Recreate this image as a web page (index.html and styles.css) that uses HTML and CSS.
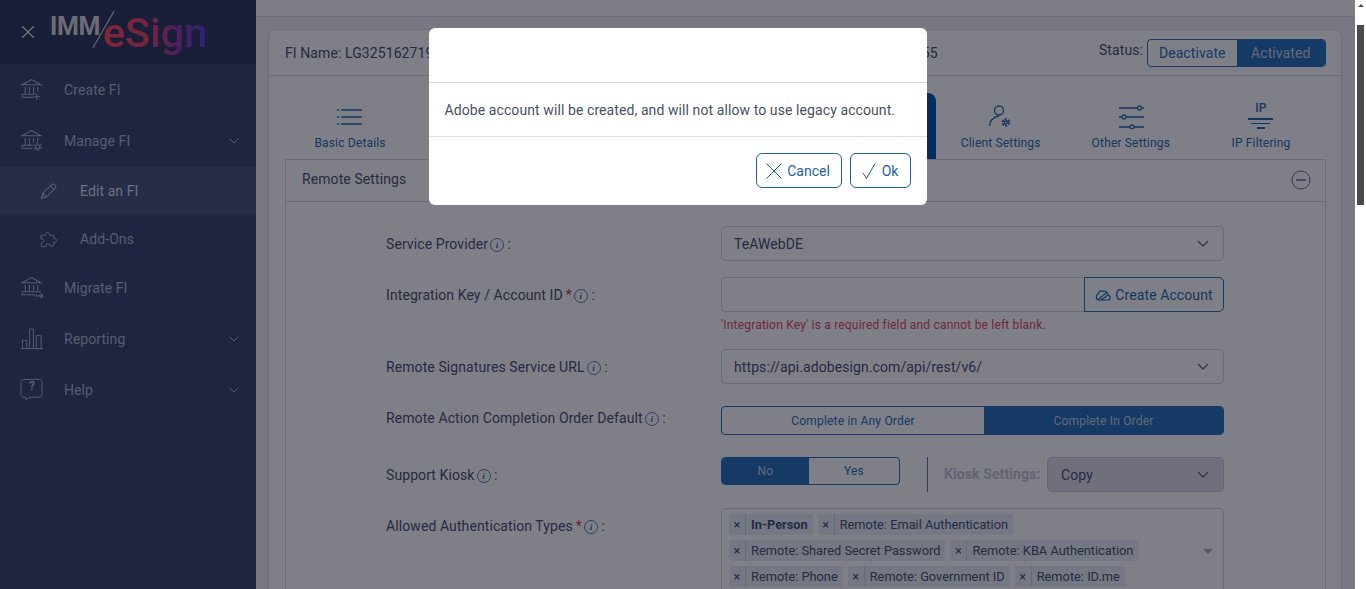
FILE: index.html
```html
<!DOCTYPE html>
<html lang="en">
<head>
    <meta charset="UTF-8">
    <meta name="viewport" content="width=device-width, initial-scale=1.0">
    <title>IMM eSign - Edit an FI</title>
    <link rel="stylesheet" href="styles.css">
</head>
<body>
<div class="shell">
  <div class="page">

    <!-- Sidebar -->
    <aside class="sidebar">
      <div class="brand">
        <svg class="brand-close" viewBox="0 0 16 16"><path d="M1.500 1.500L14.500 14.500M14.500 1.500L1.500 14.500"/></svg>
        <div class="logo">
          <span class="logo-imm">IMM</span>
          <svg class="logo-slash" viewBox="0 0 24 40"><path d="M23 1L1 39"/></svg>
          <span class="logo-esign">eSign</span>
        </div>
      </div>
      <nav>
        <a class="nav-item">
          <svg class="nav-icon" viewBox="0 0 22 22"><path d="M2 6.500L11 1.500L20 6.500ZM3 6.500H19M5 8.500V15M9 8.500V15M13 8.500V15M17 8.500V13M2 15.500H15M2 15.500V18.500H13M16 15V21M13 18H19.500"/></svg>
          <span>Create FI</span>
        </a>
        <a class="nav-item">
          <svg class="nav-icon" viewBox="0 0 22 22"><path d="M2 6.500L11 1.500L20 6.500ZM3 6.500H19M5 8.500V15M9 8.500V15M13 8.500V13M17 8.500V12M2 15.500H12M2 15.500V18.500H12"/><circle cx="17" cy="17" r="2"/><circle cx="17" cy="17" r="3.600" stroke-dasharray="2 1.800"/></svg>
          <span>Manage FI</span>
          <svg class="nav-chevron" viewBox="0 0 10 6"><path d="M.5 .5L5 5L9.500 .5"/></svg>
        </a>
        <a class="nav-item sub active">
          <svg class="sub-icon" viewBox="0 0 18 18"><path d="M1.500 16.500L3 11L12.500 1.500C13.500 .8 15 1 16 2C16.800 3 17 4 16.500 5L7 14.500ZM3 11L7 14.500M11 3L15 7"/></svg>
          <span>Edit an FI</span>
        </a>
        <a class="nav-item sub">
          <svg class="sub-icon" viewBox="0 0 18 18"><path d="M6 3.500C6 1 10 1 10 3.500V4.500H14.500V8H16C18 8 18 12 16 12H14.500V16H10.500V15C10.500 13 6.500 13 6.500 15V16.500H1.500V12.500H2.500C4.500 12.500 4.500 8.500 2.500 8.500H1V4.500H6Z"/></svg>
          <span>Add-Ons</span>
        </a>
        <a class="nav-item">
          <svg class="nav-icon" viewBox="0 0 22 22"><path d="M2 6.500L11 1.500L20 6.500ZM3 6.500H19M5 8.500V14M9 8.500V14M13 8.500V14M17 8.500V14M2 15H20M2 15V18H14M14 19H22M19.500 16.500L22 19L19.500 21.500"/></svg>
          <span>Migrate FI</span>
        </a>
        <a class="nav-item">
          <svg class="nav-icon" viewBox="0 0 24 24"><path d="M1 22.500H24M2.500 22.500V14H7V22.500M10 22.500V2H14V22.500M17 22.500V9H22V22.500"/></svg>
          <span>Reporting</span>
          <svg class="nav-chevron" viewBox="0 0 10 6"><path d="M.5 .5L5 5L9.500 .5"/></svg>
        </a>
        <a class="nav-item">
          <svg class="nav-icon" viewBox="0 0 24 24"><path d="M4 1.500H20C21.500 1.500 23 3 23 4.500V17C23 18.500 21.500 20 20 20H11L6 22.500V20H4C2.500 20 1 18.500 1 17V4.500C1 3 2.500 1.500 4 1.500Z"/></svg>
          <span class="help-mark">?</span>
          <span>Help</span>
          <svg class="nav-chevron" viewBox="0 0 10 6"><path d="M.5 .5L5 5L9.500 .5"/></svg>
        </a>
      </nav>
    </aside>

    <!-- Main content -->
    <main class="main">
      <div class="topbar"></div>
      <div class="card">
        <div class="card-head">
          <span>FI Name: LG3251627190</span>
          <span class="fi-id">FI ID: 3255</span>
          <div class="status">
            <span class="status-label">Status:</span>
            <div class="toggle status-toggle">
              <span>Deactivate</span>
              <span class="on">Activated</span>
            </div>
          </div>
        </div>

        <div class="tabs">
          <div class="tab">
            <svg class="tab-icon icon-list" viewBox="0 0 28 24"><path d="M5 5H26M5 12H26M5 19H26M1 5H3M1 12H3M1 19H3"/></svg>
            <span>Basic Details</span>
          </div>
          <div class="tab"></div>
          <div class="tab"></div>
          <div class="tab"></div>
          <div class="tab active">
            <span>Remote Settings</span>
          </div>
          <div class="tab">
            <svg class="tab-icon" viewBox="0 0 28 24"><circle cx="12" cy="5.500" r="4.500"/><path d="M2.500 21C3 16 6 12 12 11"/><circle cx="18.700" cy="17.500" r="1.500"/><circle cx="18.700" cy="17.500" r="3.200" stroke-dasharray="2 1.400" stroke-width="2.200"/></svg>
            <span>Client Settings</span>
          </div>
          <div class="tab">
            <svg class="tab-icon" viewBox="0 0 28 24"><path d="M2 3H20.500M24.500 3H27M2 12H5M9 12H27M2 22H13M17 22H27"/><circle cx="22.500" cy="3" r="2"/><circle cx="7" cy="12" r="2"/><circle cx="15" cy="22" r="2"/></svg>
            <span>Other Settings</span>
          </div>
          <div class="tab">
            <div class="ip-icon">
              <b>IP</b>
              <i class="ip-line wide"></i>
              <i class="ip-line mid"></i>
              <i class="ip-line small"></i>
            </div>
            <span>IP Filtering</span>
          </div>
        </div>

        <section class="panel">
          <div class="panel-head">
            <span>Remote Settings</span>
            <svg class="collapse" viewBox="0 0 20 20"><circle cx="10" cy="10" r="9"/><path class="collapse-bar" d="M5 10H15"/></svg>
          </div>
          <div class="panel-body">

            <div class="row">
              <label class="row-label">Service Provider<i class="info">i</i> :</label>
              <div class="row-control">
                <div class="select">
                  <span>TeAWebDE</span>
                  <svg class="chevron" viewBox="0 0 12 7"><path d="M1 1L6 6L11 1"/></svg>
                </div>
              </div>
            </div>

            <div class="row">
              <label class="row-label">Integration Key / Account ID<em class="req">*</em><i class="info">i</i> :</label>
              <div class="row-control">
                <div class="input-group">
                  <div class="input-box"></div>
                  <div class="input-btn">
                    <svg class="cloud" viewBox="0 0 16 12"><path d="M4 11H12.500C16 11 16 6.500 13 6C13 3 10 1.500 8 2.500C6.500 1 3.500 2 3.500 5C.5 5.500 .5 11 4 11ZM3.500 10L12 3.500M6 11L13 6"/></svg>
                    Create Account
                  </div>
                </div>
                <p class="error">'Integration Key' is a required field and cannot be left blank.</p>
              </div>
            </div>

            <div class="row row-wide">
              <label class="row-label">Remote Signatures Service URL<i class="info">i</i> :</label>
              <div class="row-control">
                <div class="select">
                  <span>https://api.adobesign.com/api/rest/v6/</span>
                  <svg class="chevron" viewBox="0 0 12 7"><path d="M1 1L6 6L11 1"/></svg>
                </div>
              </div>
            </div>

            <div class="row row-wide">
              <label class="row-label label-toggle">Remote Action Completion Order Default<i class="info">i</i> :</label>
              <div class="row-control">
                <div class="toggle order-toggle">
                  <span>Complete in Any Order</span>
                  <span class="on">Complete In Order</span>
                </div>
              </div>
            </div>

            <div class="row">
              <label class="row-label">Support Kiosk<i class="info">i</i> :</label>
              <div class="row-control kiosk">
                <div class="toggle kiosk-toggle">
                  <span class="on">No</span>
                  <span>Yes</span>
                </div>
                <div class="kiosk-divider"></div>
                <span class="kiosk-label">Kiosk Settings:</span>
                <div class="select disabled">
                  <span>Copy</span>
                  <svg class="chevron" viewBox="0 0 12 7"><path d="M1 1L6 6L11 1"/></svg>
                </div>
              </div>
            </div>

            <div class="row">
              <label class="row-label">Allowed Authentication Types<em class="req">*</em><i class="info">i</i> :</label>
              <div class="row-control">
                <div class="multi">
                  <div class="chips">
                    <div class="chip-row">
                      <span class="chip"><i>×</i><b>In-Person</b></span>
                      <span class="chip"><i>×</i>Remote: Email Authentication</span>
                    </div>
                    <div class="chip-row">
                      <span class="chip"><i>×</i>Remote: Shared Secret Password</span>
                      <span class="chip"><i>×</i>Remote: KBA Authentication</span>
                    </div>
                    <div class="chip-row">
                      <span class="chip"><i>×</i>Remote: Phone</span>
                      <span class="chip"><i>×</i>Remote: Government ID</span>
                      <span class="chip"><i>×</i>Remote: ID.me</span>
                    </div>
                  </div>
                  <span class="multi-arrow"></span>
                </div>
              </div>
            </div>

          </div>
        </section>
      </div>
    </main>

    <!-- Dialog -->
    <div class="overlay">
      <div class="modal">
        <div class="modal-head"></div>
        <div class="modal-body">Adobe account will be created, and will not allow to use legacy account.</div>
        <div class="modal-foot">
          <button class="btn btn-cancel">
            <svg class="btn-icon" viewBox="0 0 16 16"><path d="M.5 .5L15.500 15.500M15.500 .5L.5 15.500"/></svg>
            Cancel
          </button>
          <button class="btn btn-ok">
            <svg class="btn-icon" viewBox="0 0 16 16"><path d="M2 10L5.500 15.500L14 .5"/></svg>
            Ok
          </button>
        </div>
      </div>
    </div>
  </div>

  <!-- Scrollbar -->
  <div class="scrollbar">
    <span class="scroll-arrow"></span>
    <span class="scroll-thumb"></span>
  </div>
</div>
</body>
</html>
```

FILE: styles.css
```css
* {
    box-sizing: border-box;
}
body, html {
    margin: 0;
    padding: 0;
    height: 100%;
    overflow: hidden;
    font-family: Roboto, Arial, sans-serif;
    font-size: 14px;
    letter-spacing: .09px;
    color: #4e5672;
}
svg {
    fill: none;
    stroke: currentColor;
    flex: none;
}
.shell {
    display: flex;
    height: 589px;
    background: #fff;
}
.page {
    position: relative;
    flex: 1;
    display: flex;
    min-width: 0;
    overflow: hidden;
}

/* Scrollbar */
.scrollbar {
    width: 11px;
    background: #fff;
    display: flex;
    flex-direction: column;
    align-items: center;
    padding: 4px 2px 0 2px;
}
.scroll-arrow {
    width: 0;
    height: 0;
    border-left: 3px solid transparent;
    border-right: 3px solid transparent;
    border-bottom: 3px solid #505050;
    margin-bottom: 18px;
}
.scroll-thumb {
    width: 7px;
    height: 180px;
    background: #4a4a4a;
}

/* Sidebar */
.sidebar {
    width: 256px;
    flex: none;
    background: #3e4a70;
    color: #aeb8d0;
}
.brand {
    height: 64px;
    background: #323e60;
    display: flex;
    align-items: center;
    padding-left: 21px;
    padding-bottom: 2px;
}
.brand-close {
    width: 14px;
    height: 14px;
    color: #fff;
    stroke-width: 1.400;
    margin-top: 2px;
}
.logo {
    display: flex;
    align-items: center;
    margin-left: 15px;
    height: 50px;
    margin-top: 2px;
}
.logo-imm {
    font-size: 25px;
    font-weight: 700;
    color: #d8d8da;
    letter-spacing: -.4px;
    margin-top: -11px;
}
.logo-slash {
    width: 23px;
    height: 39px;
    margin-left: -8px;
    margin-right: -12px;
    margin-top: -6px;
    color: #d8d8da;
    stroke-width: 1.200;
}
.logo-esign {
    font-size: 41.500px;
    font-weight: 500;
    line-height: 50px;
    letter-spacing: 0;
    background: linear-gradient(90deg, #ff5060 0%, #e84870 45%, #9a40b0 72%, #6040e0 100%);
    -webkit-background-clip: text;
    background-clip: text;
    color: transparent;
    margin-top: 2px;
}
.nav-item {
    position: relative;
    display: flex;
    align-items: center;
    height: 51px;
    padding-left: 20px;
}
.nav-item.sub {
    height: 48px;
    padding: 2px 0 0 40px;
}
.nav-item.active {
    background: #4e5a7e;
    color: #d8dcf0;
}
.nav-icon {
    width: 23px;
    height: 23px;
    margin-right: 21px;
    stroke-width: 1;
}
.sub-icon {
    width: 17px;
    height: 17px;
    margin-right: 23px;
    stroke-width: 1;
}
.nav-chevron {
    width: 10px;
    height: 6px;
    margin-left: auto;
    margin-right: 17px;
    stroke-width: 1;
}
.help-mark {
    position: absolute;
    left: 29px;
    top: 15px;
    font-size: 12px;
    font-weight: 700;
}

/* Main */
.main {
    flex: 1;
    min-width: 0;
    background: #f0f0f4;
}
.topbar {
    height: 17px;
    background: #fafafc;
    border-bottom: 1px solid #e0e0e8;
}
.card {
    margin: 12px 13px 0 12px;
    background: #ffffff;
    border: 1px solid #dcdce6;
    border-radius: 8px 8px 0 0;
    padding-bottom: 20px;
}
.card-head {
    display: flex;
    align-items: center;
    height: 46px;
    padding: 0 15px 0 16px;
    border-bottom: 1px solid #d8d8e2;
}
.fi-id {
    margin-left: 429px;
}
.status {
    display: flex;
    align-items: center;
    margin-left: auto;
}
.status-label {
    margin-right: 4px;
    margin-top: -5px;
}
.toggle {
    display: flex;
    border: 1px solid #2c74bc;
    border-radius: 4px;
    overflow: hidden;
    color: #2c74bc;
}
.toggle span {
    display: flex;
    align-items: center;
    justify-content: center;
}
.toggle .on {
    background: #2c74bc;
    color: #c8d0e8;
}
.status-toggle {
    width: 179px;
    height: 28px;
}
.status-toggle span {
    width: 50%;
}
.tabs {
    display: flex;
    margin: 17px 15px 0 16px;
}
.tab {
    flex: 1;
    height: 66px;
    display: flex;
    flex-direction: column;
    align-items: center;
    justify-content: flex-end;
    padding-bottom: 9px;
    font-size: 12px;
    letter-spacing: .17px;
    color: #2c6cb0;
}
.tab.active {
    background: #0f5bb0;
    color: #fff;
    border-radius: 8px 8px 0 0;
}
.tab-icon {
    width: 28px;
    height: 24px;
    margin-bottom: 7px;
    stroke-width: 1.300;
}
.icon-list {
    stroke-width: 1.500;
}
.ip-icon {
    display: flex;
    flex-direction: column;
    align-items: center;
    height: 26px;
    margin-bottom: 7px;
    font-size: 12px;
    line-height: 11px;
}
.ip-icon b {
    font-weight: 500;
}
.ip-line {
    display: block;
    height: 2px;
    background: currentColor;
    margin-top: 3px;
}
.ip-line.wide {
    width: 25px;
    height: 1.500px;
    margin-top: 4px;
}
.ip-line.mid {
    width: 19px;
    height: 1.500px;
}
.ip-line.small {
    width: 8px;
}

/* Panel */
.panel {
    margin: 0 15px 0 16px;
    border: 1px solid #d8d8e2;
}
.panel-head {
    display: flex;
    align-items: center;
    justify-content: space-between;
    height: 42px;
    padding: 0 14px 4px 16px;
    border-bottom: 1px solid #d8d8e2;
    background: #fff;
}
.collapse {
    width: 20px;
    height: 20px;
    margin-top: 3px;
    stroke-width: 1;
    color: #6a7290;
}
.collapse-bar {
    stroke-width: 1.600;
}
.panel-body {
    padding: 24px 0 60px 100px;
}
.row {
    display: flex;
    margin-bottom: 16px;
}
.row-wide {
    margin-bottom: 22px;
}
.row-label {
    width: 335px;
    height: 35px;
    flex: none;
    line-height: 37px;
}
.label-toggle {
    height: 25px;
    line-height: 25px;
}
.row-control {
    width: 503px;
    flex: none;
}
.req {
    color: #d04060;
    font-style: normal;
    margin-left: 3px;
}
.info {
    display: inline-block;
    width: 14px;
    height: 14px;
    border: 1px solid #5f7fa8;
    border-radius: 50%;
    margin: 0 0 0 2px;
    font: italic 700 9px/12px "Liberation Serif", serif;
    text-align: center;
    color: #2c6cb0;
    vertical-align: 1px;
}
.select {
    display: flex;
    align-items: center;
    justify-content: space-between;
    height: 35px;
    border: 1px solid #d0d0dc;
    border-radius: 5px;
    padding: 0 14px 0 12px;
    background: #fff;
}
.select.disabled {
    width: 177px;
    padding-left: 13px;
    background: #e0e0ea;
    border-color: #c8c8d4;
}
.chevron {
    width: 12px;
    height: 7px;
    stroke-width: 1.400;
    color: #6a7086;
}
.input-group {
    display: flex;
    height: 35px;
}
.input-box {
    flex: 1;
    border: 1px solid #d0d0dc;
    border-right: 0;
    border-radius: 5px 0 0 5px;
}
.input-btn {
    width: 140px;
    display: flex;
    align-items: center;
    justify-content: center;
    gap: 4px;
    border: 1px solid #2c74bc;
    border-radius: 0 5px 5px 0;
    color: #2c6cb0;
}
.cloud {
    width: 16px;
    height: 12px;
    stroke-width: 1.200;
}
.error {
    margin: 5px 0 0 0;
    font-size: 12px;
    line-height: 16px;
    letter-spacing: .19px;
    color: #e0506c;
}
.order-toggle {
    height: 29px;
    font-size: 12px;
    letter-spacing: .19px;
}
.order-toggle span {
    flex: 1;
}
.order-toggle span:first-child {
    flex: none;
    width: 262px;
}
.kiosk {
    display: flex;
    align-items: flex-start;
}
.kiosk-toggle {
    width: 179px;
    height: 28px;
    font-size: 12px;
    letter-spacing: .19px;
}
.kiosk-toggle span {
    flex: 1;
}
.kiosk-toggle span:first-child {
    flex: none;
    width: 87px;
}
.kiosk-divider {
    width: 1px;
    height: 35px;
    background: #6a80a8;
    margin: 0 16px 0 27px;
}
.kiosk-label {
    font-weight: 700;
    color: #c4c6d6;
    line-height: 34px;
    margin-right: auto;
}
.multi {
    position: relative;
    display: flex;
    border: 1px solid #d0d0dc;
    border-radius: 5px;
    padding: 5px 40px 5px 7px;
}
.chips {
    display: flex;
    flex-direction: column;
    gap: 5px;
}
.chip-row {
    display: flex;
    gap: 5px;
}
.chip {
    display: flex;
    align-items: center;
    height: 21px;
    padding-right: 5px;
    background: #e9f0f8;
    border-radius: 2px;
    font-size: 12.800px;
    letter-spacing: 0;
}
.chip i {
    width: 17px;
    height: 100%;
    margin-right: 5px;
    border-right: 1px solid #c4d4e8;
    font-style: normal;
    text-align: center;
    line-height: 21px;
}
.chip b {
    font-weight: 700;
}
.multi-arrow {
    position: absolute;
    top: 40px;
    right: 10px;
    width: 0;
    height: 0;
    border-left: 5px solid transparent;
    border-right: 5px solid transparent;
    border-top: 5px solid #a8acbc;
}

/* Dialog */
.overlay {
    position: absolute;
    top: 0;
    right: 0;
    bottom: 0;
    left: 0;
    background: rgba(0, 0, 16, 0.5);
}
.modal {
    width: 498px;
    margin: 28px auto 0 auto;
    background: #fff;
    border-radius: 6px;
    color: #495260;
}
.modal-head {
    height: 55px;
    border-bottom: 1px solid #dcdee6;
}
.modal-body {
    height: 54px;
    padding: 0 16px;
    line-height: 54px;
    border-bottom: 1px solid #dcdee6;
}
.modal-foot {
    display: flex;
    justify-content: flex-end;
    gap: 8px;
    padding: 16px;
    height: 68px;
}
.btn {
    display: flex;
    align-items: center;
    justify-content: center;
    height: 35px;
    padding: 0;
    background: #fff;
    border: 1px solid #1c639e;
    border-radius: 6px;
    color: #1c639e;
    font: 14px Roboto, Arial, sans-serif;
}
.btn-cancel {
    width: 86px;
    padding-right: 1px;
}
.btn-ok {
    width: 61px;
    padding-right: 1px;
}
.btn-icon {
    width: 16px;
    height: 16px;
    margin-right: 5px;
    stroke-width: 1;
}
```
